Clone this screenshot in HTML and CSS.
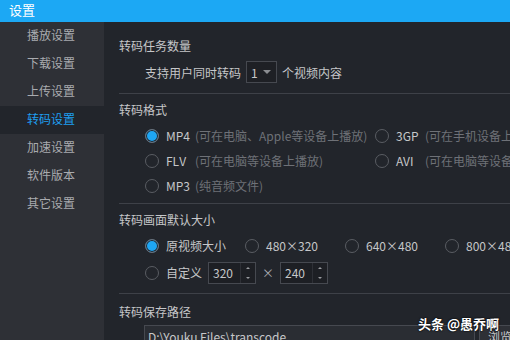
FILE: index.html
```html
<!DOCTYPE html>
<html>
<head>
    <title>设置</title>
    <link rel="stylesheet" href="styles.css">
</head>
<body>
    <div class="titlebar">设置</div>
    <div class="main">
        <div class="sidebar">
            <div class="nav">播放设置</div>
            <div class="nav">下载设置</div>
            <div class="nav">上传设置</div>
            <div class="nav active">转码设置</div>
            <div class="nav">加速设置</div>
            <div class="nav">软件版本</div>
            <div class="nav">其它设置</div>
        </div>
        <div class="content">
            <div class="section sec-count">
                <div class="head">转码任务数量</div>
                <div class="row count-row">
                    <span>支持用户同时转码</span>
                    <span class="select">1 <i class="caret"></i></span>
                    <span>个视频内容</span>
                </div>
            </div>

            <div class="section sec-format">
                <div class="head">转码格式</div>
                <div class="formats">
                    <label class="opt"><i class="radio on"></i><b class="fmt">MP4</b><em>(可在电脑、Apple等设备上播放)</em></label>
                    <label class="opt"><i class="radio"></i><b class="fmt">3GP</b><em>(可在手机设备上播放)</em></label>
                    <label class="opt"><i class="radio"></i><b class="fmt">FLV</b><em>(可在电脑等设备上播放)</em></label>
                    <label class="opt"><i class="radio"></i><b class="fmt">AVI</b><em>(可在电脑等设备上播放)</em></label>
                    <label class="opt"><i class="radio"></i><b class="fmt">MP3</b><em>(纯音频文件)</em></label>
                </div>
            </div>

            <div class="section sec-size">
                <div class="head">转码画面默认大小</div>
                <div class="sizes">
                    <label class="opt"><i class="radio on"></i>原视频大小</label>
                    <label class="opt"><i class="radio"></i>480×320</label>
                    <label class="opt"><i class="radio"></i>640×480</label>
                    <label class="opt"><i class="radio"></i>800×480</label>
                </div>
                <div class="opt custom">
                    <i class="radio"></i><span class="custom-lbl">自定义</span>
                    <span class="spin"><span class="val">320</span><span class="arrows"><i class="up"></i><i class="down"></i></span></span>
                    <span class="times">×</span>
                    <span class="spin"><span class="val">240</span><span class="arrows"><i class="up"></i><i class="down"></i></span></span>
                </div>
            </div>

            <div class="section sec-path">
                <div class="head">转码保存路径</div>
                <div class="path-row">
                    <span class="path">D:\Youku Files\transcode</span>
                    <span class="browse">浏览</span>
                </div>
            </div>
        </div>
    </div>
    <div class="mark">头条 @愚乔啊</div>
</body>
</html>
```

FILE: styles.css
```css
body {margin: 0;
      width: 510px;
      height: 340px;
      overflow: hidden;
      background-color: #22252b;
      color: #c6c7c9;
      font-family: "Noto Sans CJK SC", "Noto Sans", sans-serif;
      font-size: 12px;}

.titlebar {height: 22px;
           line-height: 20px;
           padding-left: 9px;
           background-color: #1ca8f4;
           color: #ffffff;
           font-size: 13px;}

.main {display: flex;
       height: 318px;}

.sidebar {width: 104px;
          flex-shrink: 0;
          background-color: #2e3036;}

.nav {height: 28px;
      line-height: 26px;
      padding-left: 27px;
      color: #a9abaf;}

.nav.active {background-color: #22252b;
             color: #1e9ff0;}

.content {flex: 1;
          padding: 0 0 0 15px;
          min-width: 0;}

.section {border-bottom: 1px solid #3e4148;}
.sec-count {padding: 14px 0 10px;}
.sec-format {padding: 6px 0 5px;}
.sec-size {padding: 6px 0 8px;}
.sec-path {padding: 8px 0 0;
           border-bottom: none;}

.head {height: 20px;
       line-height: 20px;}

.row {display: flex;
      align-items: center;}

.count-row {margin: 5px 0 0 26px;
            height: 22px;
            gap: 5px;}

.select {display: inline-flex;
         align-items: center;
         height: 20px;
         width: 25px;
         padding-left: 4px;
         border: 1px solid #464950;
         background-color: #1e2025;
         gap: 5px;}

.caret {display: inline-block;
        border-left: 4px solid transparent;
        border-right: 4px solid transparent;
        border-top: 4px solid #8b8d92;}

.formats {display: grid;
          grid-template-columns: 230px 1fr;
          margin: 3px 0 0 26px;}

.opt {display: flex;
      align-items: center;
      height: 25px;
      white-space: nowrap;}

.radio {display: inline-block;
        width: 12px;
        height: 12px;
        border: 1px solid #5a5d63;
        border-radius: 50%;
        margin-right: 7px;
        box-sizing: content-box;
        flex-shrink: 0;}

.radio.on {background-color: #1ea7f5;
           box-shadow: inset 0 0 0 1px #22252b;
           border-color: #6c7078;}

.fmt {font-weight: normal;
      min-width: 26px;
      margin-right: 3px;
      color: #c6c7c9;}

em {font-style: normal;
    color: #6e7177;}

.sizes {display: grid;
        grid-template-columns: 100px 100px 100px 100px;
        margin: 3px 0 0 26px;}

.custom {margin: 2px 0 0 26px;}

.custom-lbl {width: 42px;}

.spin {display: inline-flex;
       height: 20px;
       width: 46px;
       border: 1px solid #464950;
       background-color: #1d1f24;}

.spin .val {flex: 1;
            padding-left: 4px;
            line-height: 20px;}

.arrows {width: 14px;
         display: flex;
         flex-direction: column;
         align-items: center;
         justify-content: space-around;
         border-left: 1px solid #2e3036;}

.arrows .up {border-left: 2px solid transparent;
             border-right: 2px solid transparent;
             border-bottom: 2px solid #9a9ca0;}

.arrows .down {border-left: 2px solid transparent;
               border-right: 2px solid transparent;
               border-top: 2px solid #9a9ca0;}

.times {margin: 0 6px;
        color: #a9abaf;}

.path-row {display: flex;
           margin: 3px 0 0 25px;
           gap: 4px;}

.path {width: 326px;
       flex-shrink: 0;
       height: 22px;
       line-height: 22px;
       padding-left: 3px;
       border: 1px solid #464950;
       background-color: #2a2d33;
       color: #c6c7c9;}

.browse {width: 50px;
         flex-shrink: 0;
         height: 22px;
         line-height: 22px;
         padding-left: 8px;
         border: 1px solid #464950;
         background-color: #2e3036;}

.mark {position: absolute;
       left: 418px;
       top: 314px;
       color: #ffffff;
       font-size: 13px;
       font-weight: bold;
       text-shadow: 0 0 2px #000, 0 0 1px #000;}
```
